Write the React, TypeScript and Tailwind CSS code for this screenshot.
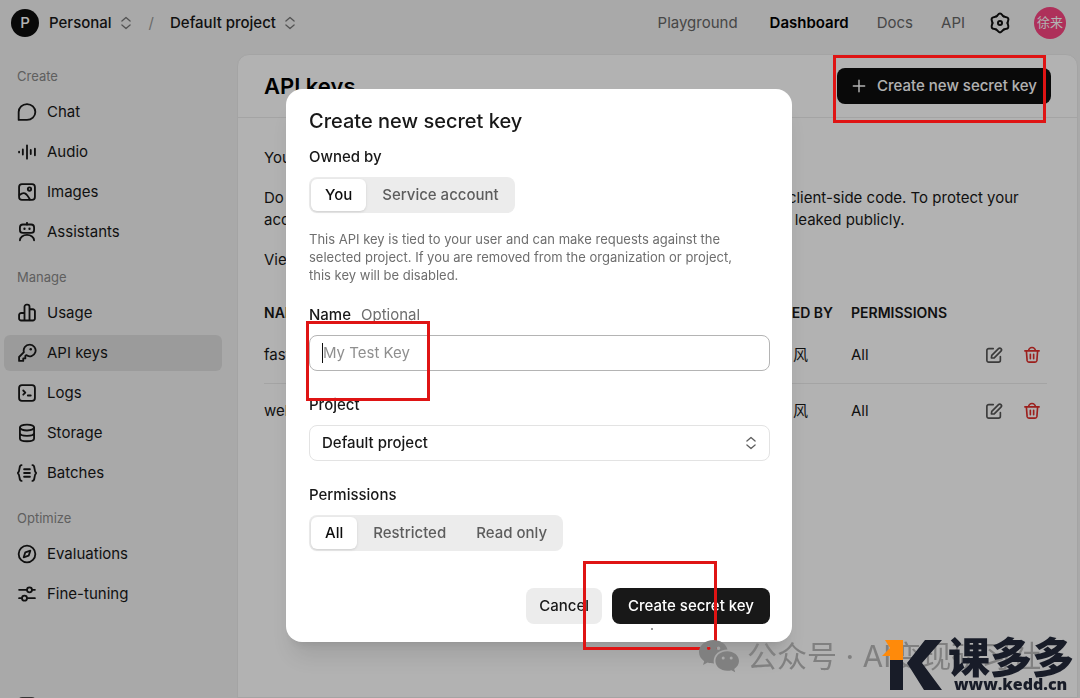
import React, { useState } from 'react';

type IconProps = { className?: string };

const Svg = ({ className = 'size-5', children }: IconProps & { children: React.ReactNode }) => (
  <svg
    viewBox="0 0 24 24"
    className={`shrink-0 ${className}`}
    fill="none"
    stroke="currentColor"
    strokeWidth="2.2"
    strokeLinecap="round"
    strokeLinejoin="round"
    aria-hidden="true"
  >
    {children}
  </svg>
);

const ChatIcon = () => (
  <Svg>
    <path d="M2 21.5V12a10 9.500 0 1 1 10 9.500z" />
  </Svg>
);

const AudioIcon = () => (
  <Svg>
    <path d="M2.5 11.5v1M7 9v6M12 4v16M16.5 9.5v5M21.5 8v8" />
  </Svg>
);

const ImageIcon = () => (
  <Svg>
    <rect x="2.5" y="2.5" width="19" height="19" rx="3.5" />
    <circle cx="15" cy="8.5" r="2" />
    <path d="M3 15.5c5-4 8-3 12.5 5.5" />
  </Svg>
);

const AssistantIcon = () => (
  <Svg>
    <path d="M12 1v2M3.5 22a8.5 6.5 0 0 1 17 0" />
    <rect x="3.5" y="3" width="17" height="10" rx="3.5" />
    <path d="M9 8v.2M15 8v.2" strokeWidth="2.8" />
  </Svg>
);

const UsageIcon = () => (
  <Svg>
    <path d="M9 21V4.500A2.500 2.500 0 0 1 11.500 2h1A2.500 2.500 0 0 1 15 4.500V21M9 12H5a2.500 2.500 0 0 0-2.500 2.500v4A2.500 2.500 0 0 0 5 21h14a2.500 2.500 0 0 0 2.500-2.500V10A2.500 2.500 0 0 0 19 7.500h-4" />
  </Svg>
);

const KeyIcon = () => (
  <Svg>
    <path d="M15 2a7 7 0 0 0-6.700 9L2.500 16.800V21.500H7.500V18.500H10V15.500l1-1A7 7 0 1 0 15 2z" />
    <path d="M16.5 7.5v.1" strokeWidth="3" />
  </Svg>
);

const LogsIcon = () => (
  <Svg>
    <rect x="2.5" y="2.5" width="19" height="19" rx="3.5" />
    <path d="M7.5 9l2.500 2.500-2.500 2.500M13 15h3.500" />
  </Svg>
);

const StorageIcon = () => (
  <Svg>
    <ellipse cx="12" cy="5.5" rx="8.5" ry="3.5" />
    <path d="M3.5 5.5v13c0 4.500 17 4.500 17 0v-13M3.500 12c0 4.500 17 4.500 17 0" />
  </Svg>
);

const BatchesIcon = () => (
  <Svg>
    <path d="M5.5 2.5C1.500 2.500 4.500 9 1 12c3.500 3 .5 9.500 4.500 9.500M18.500 2.500c4 0 1 6.500 4.500 9.500-3.500 3-.5 9.500-4.500 9.500M8.500 7.500h7M8.500 12h7M8.500 16.500h7" />
  </Svg>
);

const CompassIcon = () => (
  <Svg>
    <circle cx="12" cy="12" r="10" />
    <path d="M16 8l-2 6-6 2 2-6z" />
  </Svg>
);

const TuningIcon = () => (
  <Svg>
    <path d="M2.5 7H12M18 7h3.500M2.500 17H6M12 17h9.500" />
    <circle cx="15" cy="7" r="3" />
    <circle cx="9" cy="17" r="3" />
  </Svg>
);

const HelpIcon = () => (
  <Svg>
    <rect x="2.5" y="2.5" width="19" height="19" rx="3.5" />
  </Svg>
);

// one lobe of the cog, turned six times around the centre
const GearIcon = () => (
  <Svg className="size-[22px]">
    {[0, 60, 120, 180, 240, 300].map((angle) => (
      <path
        key={angle}
        d="M7.900 4.900C9.200 4.150 10 1.700 12 1.700S14.800 4.150 16.100 4.900"
        transform={`rotate(${angle} 12 12)`}
      />
    ))}
    <circle cx="12" cy="12" r="2.2" />
  </Svg>
);

const SortIcon = ({ className = 'size-3.5' }: IconProps) => (
  <Svg className={className}>
    <path d="M5 8.500 12 2.500l7 6M5 15.500l7 6 7-6" />
  </Svg>
);

const PlusIcon = () => (
  <Svg className="size-4">
    <path d="M12 3.5v17M3.500 12h17" />
  </Svg>
);

const EditIcon = () => (
  <Svg className="size-[18px]">
    <path d="M11 3.500H5A2.500 2.500 0 0 0 2.500 6v13A2.500 2.500 0 0 0 5 21.500h13a2.500 2.500 0 0 0 2.500-2.500v-5" />
    <path d="M9 12.500 18 3.500a2.300 2.300 0 0 1 3.300 3.300l-9 9L8.500 16z" />
  </Svg>
);

const TrashIcon = () => (
  <Svg className="size-[18px]">
    <path d="M2.500 6.500h19M7.500 6.500a4.500 4.500 0 0 1 9 0M4.500 6.500l1 13a2.500 2.500 0 0 0 2.500 2h8a2.500 2.500 0 0 0 2.500-2l1-13M9.800 11v6M14.200 11v6" />
  </Svg>
);

const WechatIcon = () => (
  <svg viewBox="0 0 40 34" className="h-[34px] w-10 shrink-0" aria-hidden="true">
    <path
      fill="currentColor"
      fillRule="evenodd"
      d="M14.500 1C6.500 1 0 6.300 0 13c0 3.700 2 7 5.200 9.200L4 26l4.700-2.400c1.800.6 3.800.9 6.300.9A11 11 0 0 1 14.700 22c0-6.400 5.900-11.500 13.800-11.500C27.200 5 21.400 1 14.500 1zM9.700 7.500a1.800 1.800 0 1 1 0 3.600 1.800 1.800 0 0 1 0-3.600zm9.800 0a1.800 1.800 0 1 1 0 3.600 1.800 1.800 0 0 1 0-3.600z"
    />
    <path
      fill="currentColor"
      fillRule="evenodd"
      d="M28.200 12.200c-6.700 0-11.800 4.400-11.800 9.800s5.200 9.800 11.800 9.800c1.500 0 2.900-.2 4.200-.6l3.800 2-1-3.300c2.900-1.900 4.800-4.700 4.800-7.900 0-5.400-5.200-9.800-11.800-9.800zm-4 5.300a1.500 1.500 0 1 1 0 3 1.500 1.500 0 0 1 0-3zm8 0a1.500 1.500 0 1 1 0 3 1.500 1.500 0 0 1 0-3z"
    />
  </svg>
);

const NAV_GROUPS = [
  {
    title: 'Create',
    items: [
      { label: 'Chat', icon: ChatIcon },
      { label: 'Audio', icon: AudioIcon },
      { label: 'Images', icon: ImageIcon },
      { label: 'Assistants', icon: AssistantIcon },
    ],
  },
  {
    title: 'Manage',
    items: [
      { label: 'Usage', icon: UsageIcon },
      { label: 'API keys', icon: KeyIcon },
      { label: 'Logs', icon: LogsIcon },
      { label: 'Storage', icon: StorageIcon },
      { label: 'Batches', icon: BatchesIcon },
    ],
  },
  {
    title: 'Optimize',
    items: [
      { label: 'Evaluations', icon: CompassIcon },
      { label: 'Fine-tuning', icon: TuningIcon },
    ],
  },
];

const KEYS = [
  { name: 'fastgpt', owner: '风', permissions: 'All' },
  { name: 'webui', owner: '风', permissions: 'All' },
];

function Header() {
  return (
    <header className="flex h-[54px] items-center justify-between pb-2 pl-[11px] pr-3.5">
      <div className="flex items-center">
        <span className="mr-2.5 flex size-7 items-center justify-center rounded-full bg-[#0d0d0d] font-medium text-white">
          P
        </span>
        <button className="flex items-center gap-[7px] font-medium">
          Personal
          <SortIcon className="size-3.5 text-[#777]" />
        </button>
        <span className="mx-4 text-[#999]">/</span>
        <button className="flex items-center gap-[7px] font-medium">
          Default project
          <SortIcon className="size-3.5 text-[#777]" />
        </button>
      </div>
      <nav className="flex items-center text-[#666]">
        <a href="#playground" className="mr-8">Playground</a>
        <a href="#dashboard" className="mr-7 font-semibold text-black">Dashboard</a>
        <a href="#docs" className="mr-7">Docs</a>
        <a href="#api" className="mr-6">API</a>
        <button aria-label="Settings" className="mr-[23px] text-[#111]">
          <GearIcon />
        </button>
        <button className="flex size-8 items-center justify-center rounded-full bg-[#fa4582] text-[13px] text-white">
          徐来
        </button>
      </nav>
    </header>
  );
}

function Sidebar() {
  return (
    <nav className="flex w-[222px] shrink-0 flex-col pl-1 pt-3">
      {NAV_GROUPS.map((group) => (
        <section key={group.title} className="mb-[17px]">
          <h2 className="px-[13px] text-[13px] leading-5 text-[#888]">{group.title}</h2>
          <ul className="mt-2 flex flex-col gap-1">
            {group.items.map(({ label, icon: Icon }) => (
              <li key={label}>
                <a
                  href={`#${label}`}
                  className={`flex h-9 items-center gap-2.5 rounded-md px-[13px] ${
                    label === 'API keys' ? 'bg-[#dfdfdf]' : ''
                  }`}
                >
                  <Icon />
                  {label}
                </a>
              </li>
            ))}
          </ul>
        </section>
      ))}
      {/* first footer link, only its top edge shows above the fold */}
      <a href="#help" aria-label="Help" className="mt-auto -mb-[18px] px-[13px]">
        <HelpIcon />
      </a>
    </nav>
  );
}

function KeysPanel() {
  return (
    <main className="ml-[15px] mr-0.5 flex-1 rounded-t-xl border border-[#ebebeb] bg-white">
      <div className="flex h-[63px] items-center justify-between border-b border-[#ebebeb] pl-[26px] pr-[26px]">
        <h1 className="text-[22px] font-semibold text-black">API keys</h1>
        <button className="flex h-9 items-center gap-2.5 rounded-lg bg-[#0d0d0d] px-3.5 font-medium text-white">
          <PlusIcon />
          Create new secret key
        </button>
      </div>
      <div className="pl-[26px] pr-[30px] pt-[29px] leading-[22px]">
        <p>Your secret API keys are listed below.</p>
        <p className="mt-[18px]">
          Do not share your API key with others or expose it in the browser or other client-side code. To protect your
          account's security, OpenAI may automatically disable any API key that has leaked publicly.
        </p>
        <p className="mt-[18px]">View usage per API key on the Usage page.</p>
        <table className="mt-[27px] w-full table-fixed text-left">
          <thead>
            <tr className="h-[30px] text-sm">
              <th className="w-[427px] font-semibold">NAME</th>
              <th className="w-[160px] pr-[18px] text-right font-semibold">CREATED BY</th>
              <th className="w-[100px] font-semibold">PERMISSIONS</th>
              <th />
            </tr>
          </thead>
          <tbody>
            {KEYS.map((key) => (
              <tr key={key.name} className="h-[55px] border-b border-[#ebebeb] last:border-0">
                <td>{key.name}</td>
                <td className="pr-[43px] text-right">{key.owner}</td>
                <td>{key.permissions}</td>
                <td>
                  <div className="flex justify-end gap-5 pr-1.5">
                    <button aria-label="Edit key" className="text-[#555]">
                      <EditIcon />
                    </button>
                    <button aria-label="Delete key" className="text-[#e02e2a]">
                      <TrashIcon />
                    </button>
                  </div>
                </td>
              </tr>
            ))}
          </tbody>
        </table>
      </div>
    </main>
  );
}

type SegmentedProps = { label: string; options: string[]; value: string; onChange: (v: string) => void };

function Segmented({ label, options, value, onChange }: SegmentedProps) {
  return (
    <div role="group" aria-label={label} className="inline-flex h-9 gap-0.5 rounded-lg bg-[#ececec] p-0.5">
      {options.map((option) => (
        <button
          key={option}
          aria-pressed={option === value}
          onClick={() => onChange(option)}
          className={`rounded-md px-3.5 font-medium ${
            option === value ? 'bg-white text-[#0d0d0d] shadow-sm' : 'text-[#5d5d5d]'
          }`}
        >
          {option}
        </button>
      ))}
    </div>
  );
}

function CreateKeyDialog() {
  const [owner, setOwner] = useState('You');
  const [permissions, setPermissions] = useState('All');

  return (
    <div
      role="dialog"
      aria-labelledby="dialog-title"
      className="relative w-[506px] rounded-2xl bg-white pb-[18px] pl-[23px] pr-[22px] pt-[18px] shadow-xl"
    >
      <h2 id="dialog-title" className="text-xl leading-7 font-medium">
        Create new secret key
      </h2>
      <h3 className="mt-3 mb-2.5 leading-5 font-medium">Owned by</h3>
      <Segmented label="Owned by" options={['You', 'Service account']} value={owner} onChange={setOwner} />
      <p className="mt-[17px] text-[13px] leading-[18px] text-[#6e6e6e]">
        This API key is tied to your user and can make requests against the
        <br />
        selected project. If you are removed from the organization or project,
        <br />
        this key will be disabled.
      </p>

      <label htmlFor="key-name" className="mt-[21px] block leading-5 font-medium">
        Name <span className="ml-1.5 font-normal text-[#6e6e6e]">Optional</span>
      </label>
      <div className="mt-2.5 flex h-9 items-center rounded-lg border border-[#b4b4b4] px-3">
        <span className="h-5 w-px bg-[#0d0d0d]" />
        <input
          id="key-name"
          placeholder="My Test Key"
          className="min-w-0 flex-1 outline-none placeholder:text-[#8f8f8f]"
        />
      </div>

      <label htmlFor="project" className="mt-6 block leading-5 font-medium">
        Project
      </label>
      <div className="relative mt-2.5">
        <select
          id="project"
          className="h-9 w-full appearance-none rounded-lg border border-[#e3e3e3] bg-white px-3 font-medium"
        >
          <option>Default project</option>
        </select>
        <SortIcon className="pointer-events-none absolute right-3 top-[11px] size-3.5 text-[#5d5d5d]" />
      </div>

      <h3 className="mt-6 mb-2.5 leading-5 font-medium">Permissions</h3>
      <Segmented
        label="Permissions"
        options={['All', 'Restricted', 'Read only']}
        value={permissions}
        onChange={setPermissions}
      />

      <div className="mt-[37px] flex justify-end gap-2.5 font-medium">
        <button className="h-9 rounded-lg bg-[#ececec] px-[13px]">Cancel</button>
        <button className="h-9 rounded-lg bg-[#181818] px-4 text-white">Create secret key</button>
      </div>

      {/* callouts */}
      <div className="pointer-events-none absolute left-5 top-[232px] h-20 w-[124px] border-3 border-[#df1414]" />
      <div className="pointer-events-none absolute right-[75px] top-[472px] h-[89px] w-[134px] border-3 border-[#df1414]" />
      <span className="absolute bottom-3 left-[365px] size-0.5 rounded-full bg-[#777]" />
    </div>
  );
}

function Watermark() {
  return (
    <div className="pointer-events-none fixed bottom-0 right-0 h-[62px] w-[381px]">
      <div className="absolute left-0 top-0 flex items-center gap-2 whitespace-nowrap text-[30px] leading-[40px] text-[#808080]">
        <WechatIcon />
        公众号 · AI变现研习社
      </div>
      <div className="absolute right-0 top-1 flex gap-1.5 text-[#181c28]">
        <svg viewBox="0 0 60 50" className="h-[50px] w-[60px]" aria-hidden="true">
          <path fill="#181c28" d="M8 20h13v30H8zM43 0h17L40 23l20 27H42L25 23z" />
          <path fill="#ff8a0a" d="M3 0h18v20H8v-4H0l8-8z" />
        </svg>
        <div className="w-[132px] whitespace-nowrap">
          <div className="text-[42px] leading-9 font-black">课多多</div>
          <div className="pl-1.5 font-['Open_Sans',sans-serif] text-base leading-4 font-extrabold">www.kedd.cn</div>
        </div>
      </div>
    </div>
  );
}

export default function App() {
  return (
    <div className="h-screen overflow-hidden bg-[#f2f2f2] font-[Inter,'Noto_Sans_CJK_SC',sans-serif] text-[15px] text-[#181818]">
      <div className="flex h-full flex-col">
        <Header />
        <div className="flex min-h-0 flex-1">
          <Sidebar />
          <KeysPanel />
        </div>
      </div>
      <div className="fixed inset-0 flex items-start justify-center bg-black/30 pr-0.5 pt-[89px]">
        <CreateKeyDialog />
      </div>
      <div className="pointer-events-none fixed right-[34px] top-[55px] h-[68px] w-[213px] border-3 border-[#df1414]" />
      <Watermark />
    </div>
  );
}
